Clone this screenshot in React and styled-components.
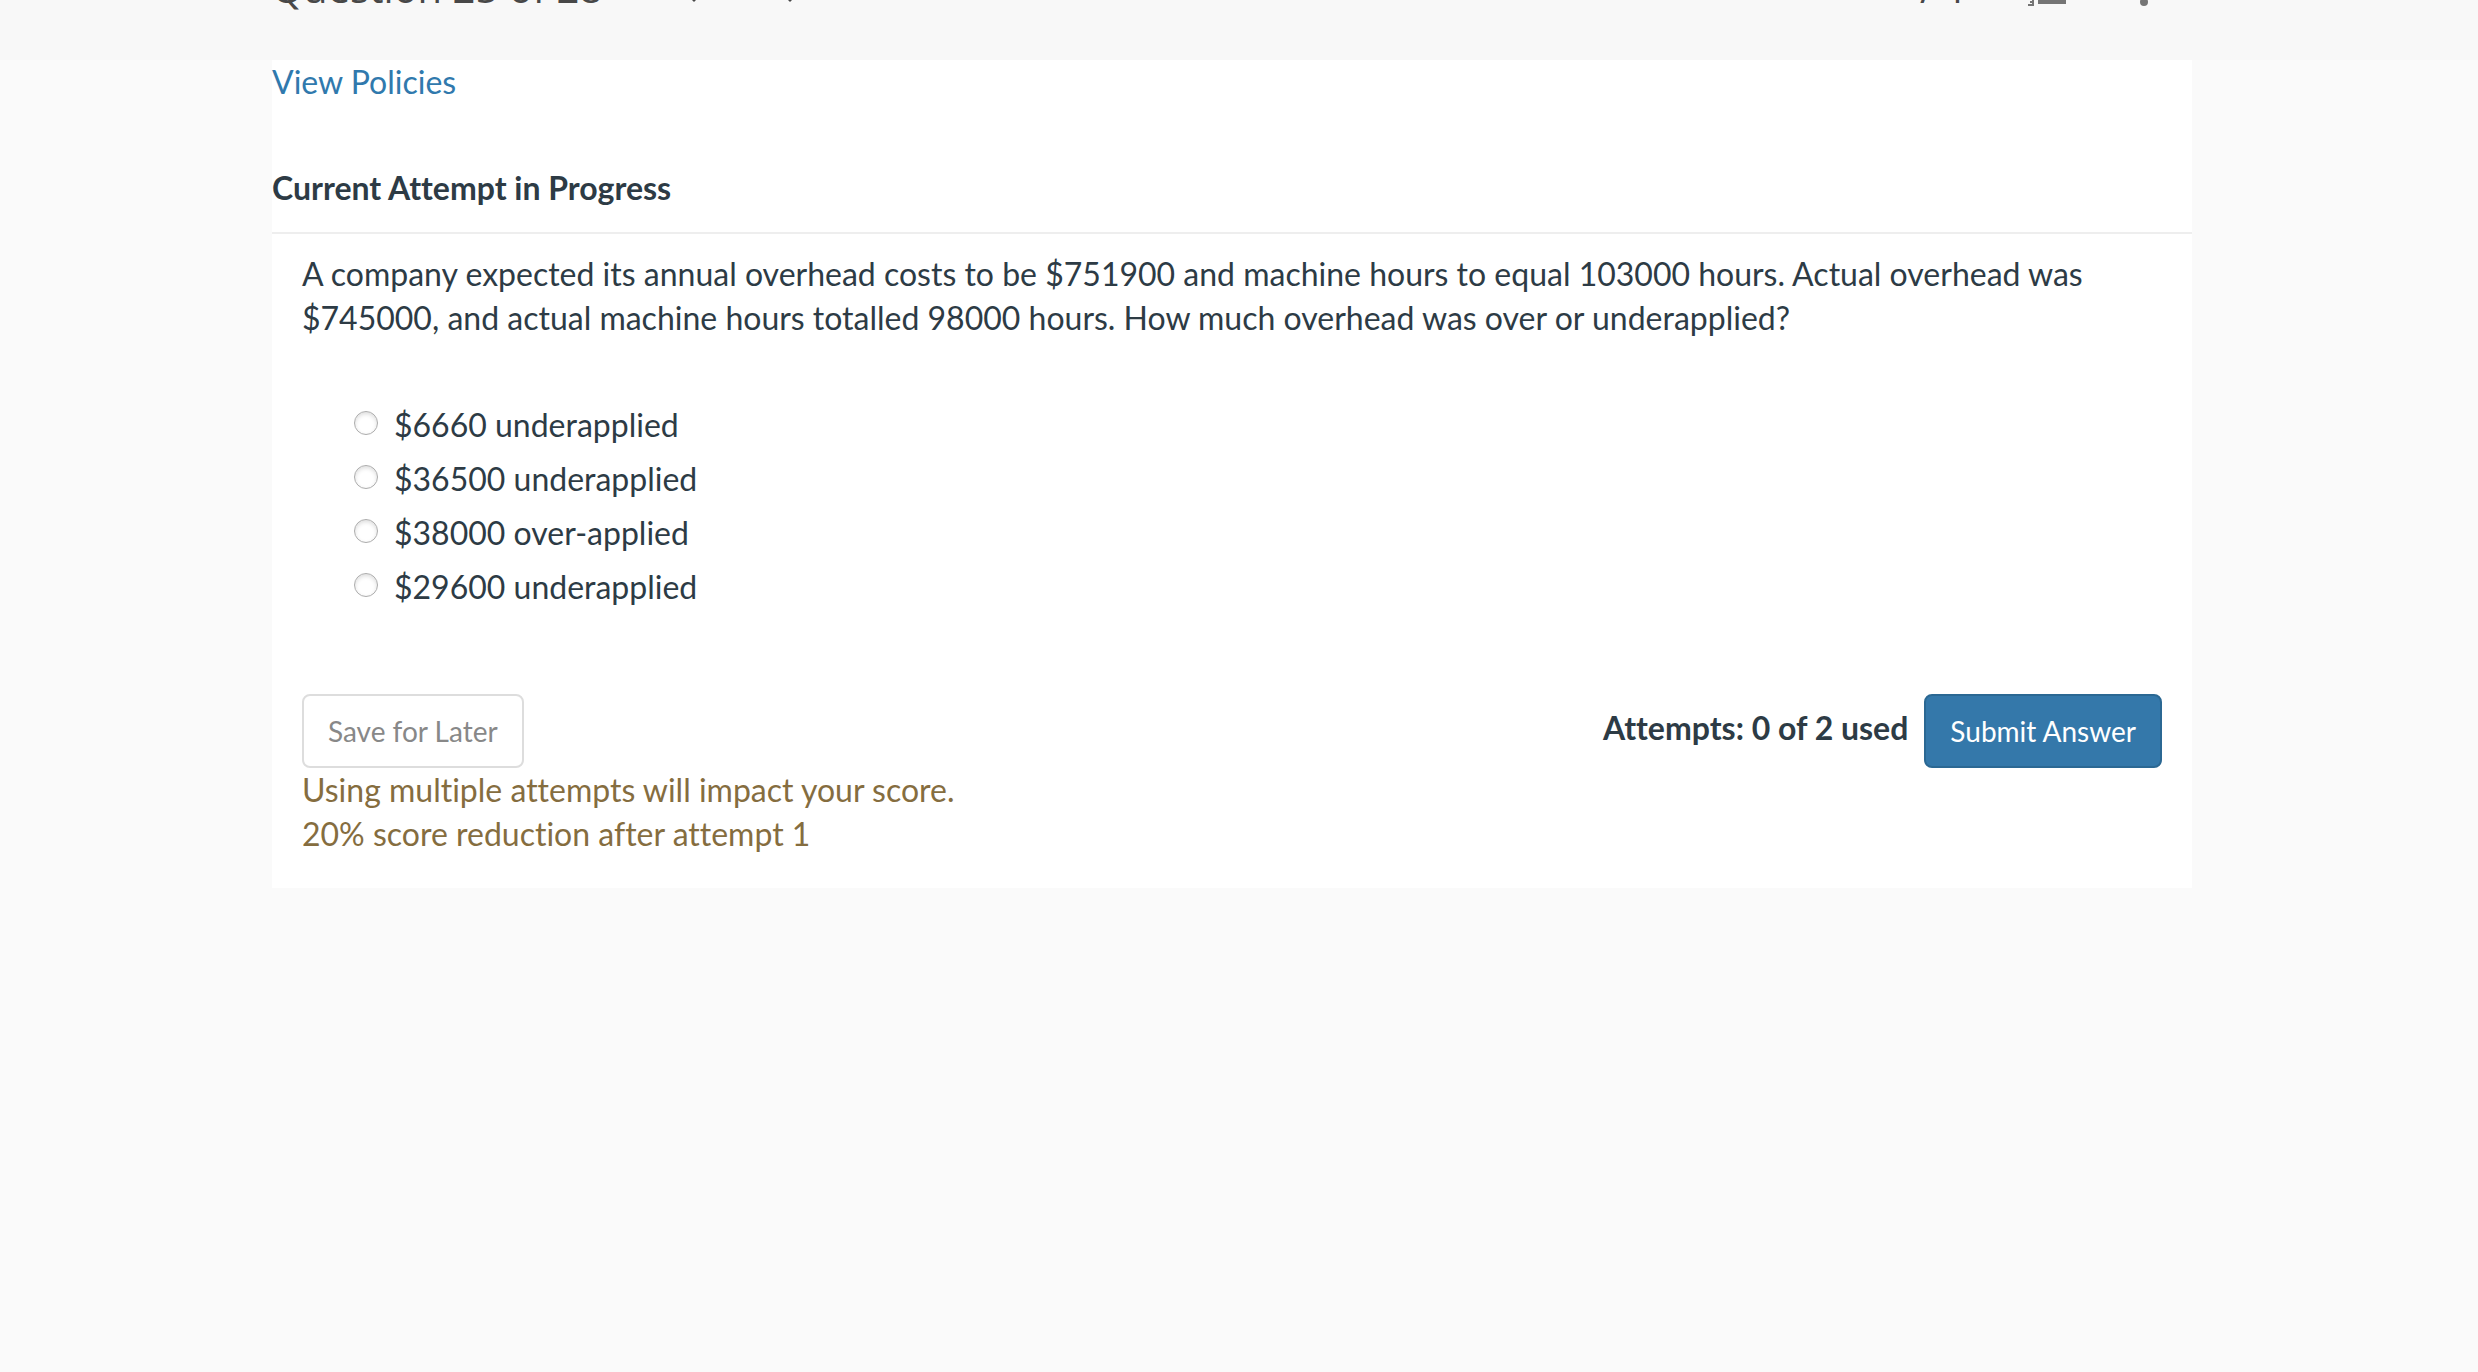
import React from "react";
import styled, { createGlobalStyle } from "styled-components";

const Global = createGlobalStyle`
  *, *::before, *::after { box-sizing: border-box; }
  body {
    margin: 0;
    background: #fafafa;
    color: #2d3b45;
    font-family: Lato, "Liberation Sans", sans-serif;
    font-size: 32px;
    font-variant-ligatures: none;
    line-height: 44px;
  }
`;

const Page = styled.div`
  min-height: 100vh;
`;

const HeaderBar = styled.header`
  display: flex;
  flex-direction: column;
  justify-content: flex-end;
  height: 60px;
  overflow: hidden;
  background: #f8f8f8;
`;

const HeaderContent = styled.div`
  display: flex;
  align-items: flex-end;
  justify-content: space-between;
  margin: 0 286px 46px 272px;
  padding-right: 24px;
  color: #484848;
  font-family: "Open Sans", sans-serif;
  font-size: 40px;
  line-height: 52px;
`;

const HeaderGroup = styled.div`
  display: flex;
  align-items: flex-end;
  gap: ${(p) => p.$gap};
`;

const Title = styled.h1`
  margin: 0;
  font-size: inherit;
  font-weight: 400;
`;

const IconButton = styled.button`
  display: block;
  width: 48px;
  height: 48px;
  padding: 0;
  border: 0;
  background: none;
  color: ${(p) => (p.$dark ? "#484848" : "#757575")};

  svg {
    display: block;
    width: 100%;
    height: 100%;
    fill: currentColor;
  }
`;

const Card = styled.main`
  margin: 0 286px 0 272px;
  padding-bottom: 32px;
  background: #fff;
`;

const PolicyLink = styled.a`
  color: #3079ad;
  text-decoration: none;
`;

const AttemptHeading = styled.h2`
  margin: 0;
  padding: 62px 0 22px;
  border-bottom: 2px solid #eee;
  font-size: 32px;
  font-weight: 700;
`;

const Body = styled.div`
  padding: 18px 30px 0;
`;

const Prompt = styled.p`
  margin: 0;
`;

const Options = styled.fieldset`
  display: grid;
  gap: 10px;
  margin: 63px 0 0;
  padding: 0 0 0 52px;
  border: 0;
`;

const Option = styled.label`
  display: flex;
  gap: 16px;
`;

const Radio = styled.input`
  appearance: none;
  width: 24px;
  height: 24px;
  margin: 8px 0 0;
  border: 1px solid #acacac;
  border-radius: 50%;
  background: #fff;
  box-shadow: inset 0 2px 4px #ddd;
`;

const Footer = styled.div`
  display: flex;
  justify-content: space-between;
  margin-top: 85px;
`;

const SubmitGroup = styled.div`
  display: flex;
  gap: 16px;
`;

const Attempts = styled.strong`
  padding-top: 12px;
`;

const Button = styled.button`
  height: 74px;
  padding: 0 24px;
  border: 2px solid ${(p) => (p.$primary ? "#2b6893" : "#ddd")};
  border-radius: 8px;
  background: ${(p) => (p.$primary ? "#3478aa" : "#fff")};
  color: ${(p) => (p.$primary ? "#fff" : "#888")};
  font: inherit;
  font-size: 28px;
`;

const Warning = styled.p`
  margin: 0;
  color: #856d3f;
`;

const icons = {
  previous: "M15.41 7.41L14 6l-6 6 6 6 1.41-1.41L10.83 12z",
  next: "M10 6L8.59 7.41 13.17 12l-4.58 4.59L10 18l6-6z",
  list: "M2 17h2v.5H3v1h1v.5H2v1h3v-4H2v1zm1-9h1V4H2v1h1v3zm-1 3h1.8L2 13.1v.9h3v-1H3.2L5 10.9V10H2v1zm5-6v2h14V5H7zm0 14h14v-2H7v2zm0-6h14v-2H7v2z",
  more: "M12 8a2 2 0 1 0 0-4 2 2 0 0 0 0 4zm0 2a2 2 0 1 0 0 4 2 2 0 0 0 0-4zm0 6a2 2 0 1 0 0 4 2 2 0 0 0 0-4z",
};

function IconAction({ icon, label, dark }) {
  return (
    <IconButton type="button" aria-label={label} $dark={dark}>
      <svg viewBox="0 0 24 24" aria-hidden="true">
        <path d={icons[icon]} />
      </svg>
    </IconButton>
  );
}

const choices = [
  "$6660 underapplied",
  "$36500 underapplied",
  "$38000 over-applied",
  "$29600 underapplied",
];

export default function App() {
  return (
    <Page>
      <Global />
      <HeaderBar>
        <HeaderContent>
          <HeaderGroup $gap="64px">
            <Title>Question 25 of 28</Title>
            <HeaderGroup $gap="56px">
              <IconAction icon="previous" label="Previous question" dark />
              <IconAction icon="next" label="Next question" dark />
            </HeaderGroup>
          </HeaderGroup>
          <HeaderGroup $gap="56px">
            <span>- / 1</span>
            <HeaderGroup $gap="48px">
              <IconAction icon="list" label="Question list" />
              <IconAction icon="more" label="More options" />
            </HeaderGroup>
          </HeaderGroup>
        </HeaderContent>
      </HeaderBar>
      <Card>
        <PolicyLink href="#policies">View Policies</PolicyLink>
        <AttemptHeading>Current Attempt in Progress</AttemptHeading>
        <Body>
          <Prompt>
            A company expected its annual overhead costs to be $751900 and machine hours to equal
            103000 hours. Actual overhead was $745000, and actual machine hours totalled 98000
            hours. How much overhead was over or underapplied?
          </Prompt>
          <Options aria-label="Answer choices">
            {choices.map((choice) => (
              <Option key={choice}>
                <Radio type="radio" name="answer" />
                {choice}
              </Option>
            ))}
          </Options>
          <Footer>
            <Button type="button">Save for Later</Button>
            <SubmitGroup>
              <Attempts>Attempts: 0 of 2 used</Attempts>
              <Button type="button" $primary>Submit Answer</Button>
            </SubmitGroup>
          </Footer>
          <Warning>
            Using multiple attempts will impact your score.
            <br />
            20% score reduction after attempt 1
          </Warning>
        </Body>
      </Card>
    </Page>
  );
}
